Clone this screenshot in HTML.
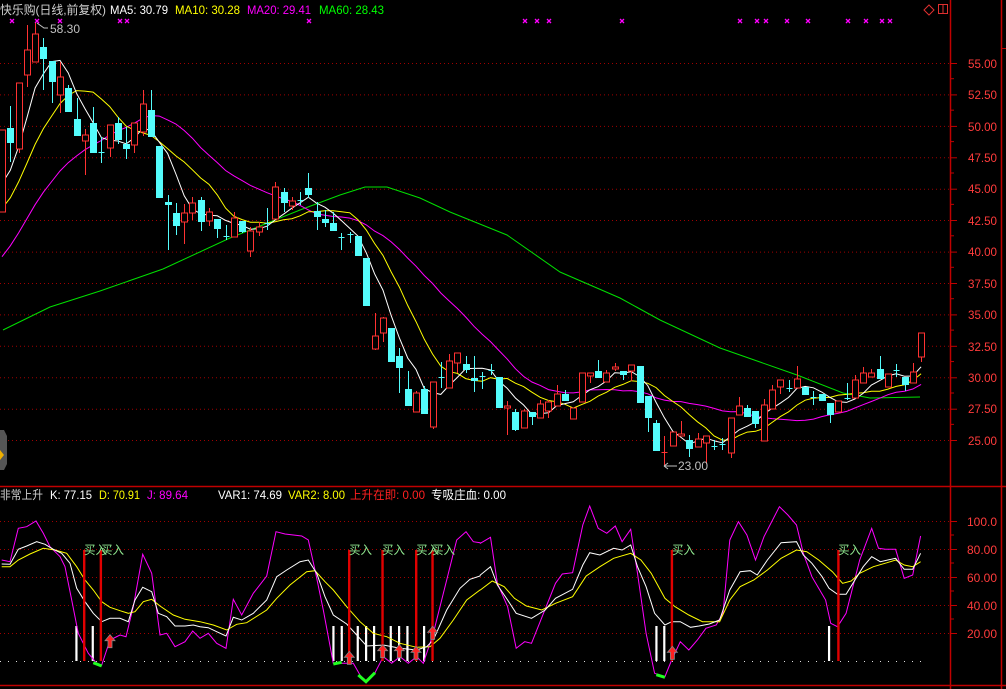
<!DOCTYPE html>
<html><head><meta charset="utf-8">
<style>
html,body{margin:0;padding:0;background:#000;}
svg{display:block;}
text{font-family:"Liberation Sans","Noto Sans CJK SC",sans-serif;font-size:12px;}
</style></head>
<body>
<svg id="s" width="1006" height="689" viewBox="0 0 1006 689" xmlns="http://www.w3.org/2000/svg">
<rect width="1006" height="689" fill="#000"/>
<g id="grid"></g>
<g id="lines"></g>
<g id="cand"></g>
<g id="low"></g>
<line x1="950.5" y1="0" x2="950.5" y2="689" stroke="#c00000" stroke-width="1.5"/>
<line x1="1001.5" y1="0" x2="1001.5" y2="689" stroke="#c00000" stroke-width="1.5"/>
<line x1="0" y1="486.5" x2="1006" y2="486.5" stroke="#c00000" stroke-width="1.5"/>
<line x1="0" y1="685.5" x2="1006" y2="685.5" stroke="#c00000" stroke-width="1.5"/>
<line x1="1001" y1="48.5" x2="1006" y2="48.5" stroke="#c00000"/>
<g id="ticks"></g>
<path d="M929 5 L934 10 L929 15 L924 10 Z" fill="none" stroke="#e03030"/>
<rect x="938.5" y="4.5" width="9" height="9" fill="none" stroke="#e03030"/>
<line x1="943" y1="4.5" x2="943" y2="13.5" stroke="#e03030"/>
<path d="M0 430 L4 430 L7 436 L7 464 L4 470 L0 470 Z" fill="#555"/>
<path d="M0 450 L4 455 L0 460 Z" fill="#f0b000"/>
<text x="0" y="14" fill="#d0d0d0" textLength="106" lengthAdjust="spacingAndGlyphs">快乐购(日线,前复权)</text>
<text x="110" y="14" fill="#fff" textLength="58" lengthAdjust="spacingAndGlyphs">MA5: 30.79</text>
<text x="175" y="14" fill="#ffff00" textLength="65" lengthAdjust="spacingAndGlyphs">MA10: 30.28</text>
<text x="247" y="14" fill="#ff00ff" textLength="64" lengthAdjust="spacingAndGlyphs">MA20: 29.41</text>
<text x="319" y="14" fill="#00ff00" textLength="65" lengthAdjust="spacingAndGlyphs">MA60: 28.43</text>
<text x="0" y="499" fill="#d0d0d0" textLength="43" lengthAdjust="spacingAndGlyphs">非常上升</text>
<text x="50" y="499" fill="#fff" textLength="42" lengthAdjust="spacingAndGlyphs">K: 77.15</text>
<text x="99" y="499" fill="#ffff00" textLength="41" lengthAdjust="spacingAndGlyphs">D: 70.91</text>
<text x="147" y="499" fill="#ff00ff" textLength="41" lengthAdjust="spacingAndGlyphs">J: 89.64</text>
<text x="218" y="499" fill="#fff" textLength="64" lengthAdjust="spacingAndGlyphs">VAR1: 74.69</text>
<text x="288" y="499" fill="#ffff00" textLength="57" lengthAdjust="spacingAndGlyphs">VAR2: 8.00</text>
<text x="350" y="499" fill="#ff2020" textLength="75" lengthAdjust="spacingAndGlyphs">上升在即: 0.00</text>
<text x="431" y="499" fill="#fff" textLength="75" lengthAdjust="spacingAndGlyphs">专吸庄血: 0.00</text>
<path d="M37 23 L44 28 L48 28" fill="none" stroke="#c0c0c0"/>
<text x="50" y="33" fill="#c0c0c0" textLength="30" lengthAdjust="spacingAndGlyphs">58.30</text>
<path d="M664 466 L677 466 M664 466 L668 463 M664 466 L668 469" fill="none" stroke="#c0c0c0"/>
<text x="678" y="470" fill="#c0c0c0" textLength="30" lengthAdjust="spacingAndGlyphs">23.00</text>
<g fill="#ff3c3c">
<text x="968" y="68" textLength="29" lengthAdjust="spacingAndGlyphs">55.00</text>
<text x="968" y="99" textLength="29" lengthAdjust="spacingAndGlyphs">52.50</text>
<text x="968" y="131" textLength="29" lengthAdjust="spacingAndGlyphs">50.00</text>
<text x="968" y="162" textLength="29" lengthAdjust="spacingAndGlyphs">47.50</text>
<text x="968" y="193" textLength="29" lengthAdjust="spacingAndGlyphs">45.00</text>
<text x="968" y="225" textLength="29" lengthAdjust="spacingAndGlyphs">42.50</text>
<text x="968" y="256" textLength="29" lengthAdjust="spacingAndGlyphs">40.00</text>
<text x="968" y="288" textLength="29" lengthAdjust="spacingAndGlyphs">37.50</text>
<text x="968" y="319" textLength="29" lengthAdjust="spacingAndGlyphs">35.00</text>
<text x="968" y="351" textLength="29" lengthAdjust="spacingAndGlyphs">32.50</text>
<text x="968" y="382" textLength="29" lengthAdjust="spacingAndGlyphs">30.00</text>
<text x="968" y="413" textLength="29" lengthAdjust="spacingAndGlyphs">27.50</text>
<text x="968" y="445" textLength="29" lengthAdjust="spacingAndGlyphs">25.00</text>
<text x="967" y="526" textLength="30" lengthAdjust="spacingAndGlyphs">100.0</text>
<text x="967" y="554" textLength="30" lengthAdjust="spacingAndGlyphs">80.00</text>
<text x="967" y="582" textLength="30" lengthAdjust="spacingAndGlyphs">60.00</text>
<text x="967" y="610" textLength="30" lengthAdjust="spacingAndGlyphs">40.00</text>
<text x="967" y="638" textLength="30" lengthAdjust="spacingAndGlyphs">20.00</text>
</g>
<g fill="#90e890" font-size="11">
<text x="84" y="554" textLength="23" lengthAdjust="spacingAndGlyphs">买入</text>
<text x="101" y="554" textLength="23" lengthAdjust="spacingAndGlyphs">买入</text>
<text x="349" y="554" textLength="23" lengthAdjust="spacingAndGlyphs">买入</text>
<text x="382" y="554" textLength="23" lengthAdjust="spacingAndGlyphs">买入</text>
<text x="416" y="554" textLength="23" lengthAdjust="spacingAndGlyphs">买入</text>
<text x="432" y="554" textLength="23" lengthAdjust="spacingAndGlyphs">买入</text>
<text x="672" y="554" textLength="23" lengthAdjust="spacingAndGlyphs">买入</text>
<text x="838" y="554" textLength="23" lengthAdjust="spacingAndGlyphs">买入</text>
</g>
</svg>
<script>
(function(){
var NS="http://www.w3.org/2000/svg";
function el(p,t,a){var e=document.createElementNS(NS,t);for(var k in a)e.setAttribute(k,a[k]);document.getElementById(p).appendChild(e);return e;}
function pl(p,pts,c,w){el(p,"polyline",{points:pts.map(function(q){return q[0].toFixed(1)+","+q[1].toFixed(1)}).join(" "),fill:"none",stroke:c,"stroke-width":w||1});}
var gy=[63,94.4,125.9,157.3,188.7,220,251.6,283,314.4,345.8,377.3,408.7,440,521,549,577,605,633];
gy.forEach(function(y){el("grid","line",{x1:0,y1:y+.5,x2:950,y2:y+.5,stroke:"#a00000","stroke-dasharray":"1,3"});
el("ticks","line",{x1:950,y1:y+.5,x2:957,y2:y+.5,stroke:"#c00000"});});
for(var i=0;i<gy.length-1;i++){if(gy[i+1]-gy[i]<40)el("ticks","line",{x1:950,y1:(gy[i]+gy[i+1])/2,x2:954,y2:(gy[i]+gy[i+1])/2,stroke:"#c00000"});}
el("grid","line",{x1:0,y1:661.5,x2:922,y2:661.5,stroke:"#ddd","stroke-dasharray":"1,7"});
[12,37,60,120,127,309,525,537,549,622,740,757,766,787,808,848,866,882,890].forEach(function(x){
el("grid","path",{d:"M"+(x-2)+" 19 L"+(x+2)+" 23 M"+(x+2)+" 19 L"+(x-2)+" 23",stroke:"#ff00ff","stroke-width":1.3});});
var D=[[212,130,130,212],[128,143,106,162],[149,83,83,153],[75,50,25,87],[62,34,23,62],[47,59,38,90],[61,82,61,103],[95,77,62,113],[88,112,85,112],[119,136,98,136],[141,135,129,175],[123,153,107,153],[152,152.01,137,163],[148,125,125,157],[123,140,117,144],[144,149,127,159],[145,123,123,153],[132,104,90,136],[110,137,90,137],[146,198,146,198],[202,205,195,250],[213,226,203,235],[222,213,204,244],[213,203,197,220],[200,222,197,231],[221,212,208,226],[219,229,219,238],[236,236.01,225,240],[237,218,212,237],[221,232,221,233],[251,231,227,257],[232,227,222,236],[223,223.01,208,230],[219,187,182,219],[192,203,188,212],[206,201,197,210],[200,200,192,205],[188,195,173,198],[211,217,202,230],[219,223,210,227],[223,231,212,231],[237,237,233,250],[234,234.01,232,243],[236,256,236,256],[258,306,258,306],[349,336,313,350],[333,318,317,342],[328,362,328,362],[356,368,348,393],[389,406,371,406],[412,393,391,412],[389,414,386,414],[427,382,382,429],[377,377,362,388],[388,361,354,388],[363,353,353,373],[364,370,356,373],[378,381,356,392],[376,376.01,372,389],[370,370,364,375],[377,408,377,408],[408,406,401,435],[412,430,409,431],[428,411,409,428],[412,417,412,425],[418,404,400,418],[411,402,400,418],[406,394,385,406],[394,401,390,401],[419,408,408,419],[402,373,373,402],[376,373,373,383],[371,378,360,378],[382,373,370,382],[369,367,363,371],[371,375,371,380],[371,365,365,381],[366,403,366,403],[396,418,396,432],[423,451,420,451],[453,452,436,466],[446,432,432,446],[436,434,421,436],[440,449,435,457],[447,439,433,447],[443,436,436,464],[446,446,440,450],[444,444,438,450],[453,418,418,458],[415,406,397,415],[408,417,405,417],[411,424,411,428],[441,405,399,441],[409,390,385,409],[387,380,380,394],[388,388.01,380,392],[388,379,366,388],[387,395,387,395],[397,397.01,391,405],[394,401,394,401],[403,415,403,423],[412,401,401,412],[398,398,383,400],[398,380,375,398],[383,373,367,383],[377,373,369,377],[369,379,356,379],[387,374,374,387],[370,370.01,364,377],[377,385,377,391],[383,372,363,383],[357,333,333,362]];
function X(i){return 2+i*8.28;}
var pad=[];for(var k=0;k<19;k++){var t=k/18;pad.push(360-175*Math.pow(t,0.8));}
var C=pad.concat(D.map(function(d){return d[1]}));
function ma(n){var r=[];for(var i=0;i<D.length;i++){var j=i+19,s=0,m=Math.min(n,j+1);for(var q=0;q<m;q++)s+=C[j-q];r.push([X(i),s/m]);}return r;}
pl("lines",[[3,330],[50,307],[100,291],[163,269],[230,238],[300,210],[340,195],[365,187],[387,187],[420,198],[450,212],[507,235],[560,272],[620,298],[660,320],[720,348],[797,375],[843,393],[870,398],[920,397]],"#00e000");
pl("lines",ma(20),"#ff00ff");
pl("lines",ma(10),"#ffff00");
pl("lines",ma(5),"#ffffff");
D.forEach(function(d,i){var x=Math.round(X(i))+.5,o=d[0],c=d[1],h=d[2],l=d[3];
var up=c<o,col=up?"#ff3232":"#54fcfc",top=Math.min(o,c),bot=Math.max(o,c);
if(bot-top<1.5){el("cand","line",{x1:x,y1:h,x2:x,y2:l,stroke:col});el("cand","line",{x1:x-3,y1:top+.5,x2:x+3,y2:top+.5,stroke:col});return;}
if(h<top)el("cand","line",{x1:x,y1:h,x2:x,y2:top,stroke:col});
if(l>bot)el("cand","line",{x1:x,y1:bot,x2:x,y2:l,stroke:col});
if(up)el("cand","rect",{x:x-3,y:top,width:6,height:bot-top,fill:"#000",stroke:col});
else el("cand","rect",{x:x-3.5,y:top,width:7,height:bot-top,fill:col});});
function z7(a){return a.map(function(p){return [p[0]/3,500+p[1]/3]});}
function z8(a){return a.map(function(p){return [470+p[0]/2.925,500+p[1]/3]});}
var J7=[[5,180],[30,185],[55,85],[80,80],[108,63],[130,100],[150,140],[180,170],[195,200],[215,300],[235,400],[265,460],[290,490],[305,495],[330,420],[360,405],[378,410],[400,320],[428,163],[455,220],[480,405],[500,400],[525,440],[555,425],[578,393],[600,415],[625,400],[650,430],[678,445],[700,298],[725,345],[760,280],[800,228],[828,95],[855,102],[905,108],[925,120],[945,210],[970,330],[1000,490],[1030,490],[1060,490],[1080,525],[1098,545],[1125,518],[1150,470],[1175,490],[1200,470],[1225,490],[1250,470],[1270,490],[1300,400],[1340,240],[1370,120],[1398,95],[1420,125],[1440,128]];
var J8=[[30,130],[60,112],[80,250],[110,320],[135,445],[160,425],[180,430],[250,250],[270,222],[300,218],[330,75],[350,18],[375,85],[400,100],[425,78],[445,125],[470,88],[490,220],[515,400],[540,520],[570,530],[590,480],[615,425],[640,450],[665,420],[690,385],[720,375],[740,340],[760,120],[785,65],[810,105],[835,180],[860,110],[905,20],[930,45],[955,75],[975,160],[1000,230],[1020,265],[1040,300],[1055,370],[1075,380],[1100,340],[1140,180],[1175,85],[1195,145],[1215,148],[1245,148],[1270,235],[1295,225],[1318,108]];
var K7=[[5,192],[30,193],[55,148],[80,138],[110,125],[135,133],[160,148],[185,160],[210,190],[230,265],[255,305],[280,340],[305,365],[330,355],[360,355],[385,365],[405,300],[428,262],[455,275],[475,340],[500,350],[525,378],[555,378],[580,375],[600,380],[625,383],[650,395],[678,408],[700,352],[725,360],[760,340],[800,300],[830,230],[860,210],[900,185],[925,180],[950,220],[975,290],[1000,345],[1040,372],[1070,405],[1100,438],[1150,435],[1200,445],[1250,450],[1280,440],[1300,420],[1340,330],[1380,265],[1410,238],[1440,228]];
var K8=[[30,225],[60,200],[80,255],[110,300],[135,340],[180,355],[220,330],[250,295],[300,268],[330,195],[350,158],[380,165],[420,145],[445,150],[470,135],[490,200],[515,260],[540,340],[570,375],[590,365],[615,365],[645,382],[670,378],[700,372],[730,360],[760,270],[790,215],[820,212],[840,225],[870,180],[910,128],[955,125],[975,165],[1000,190],[1030,230],[1050,265],[1075,283],[1100,283],[1120,250],[1150,200],[1175,170],[1200,185],[1245,175],[1270,208],[1295,208],[1318,160]];
var D7=[[5,200],[30,200],[55,180],[90,162],[130,145],[165,150],[200,160],[230,200],[255,240],[280,270],[305,305],[330,322],[360,332],[385,340],[405,335],[430,305],[455,298],[480,318],[520,345],[555,358],[600,365],[640,375],[680,390],[710,373],[740,368],[800,330],[830,295],[870,255],[920,215],[945,212],[975,245],[1000,270],[1040,320],[1080,365],[1120,400],[1160,410],[1200,430],[1250,442],[1290,440],[1320,415],[1360,360],[1400,300],[1440,270]];
var D8=[[30,270],[65,243],[100,260],[130,295],[165,318],[210,330],[250,310],[300,290],[340,228],[380,200],[420,175],[470,160],[500,180],[530,220],[570,295],[600,320],[640,345],[680,365],[730,365],[760,300],[790,260],[830,240],[870,210],[910,175],[955,150],[985,155],[1020,180],[1060,215],[1090,250],[1115,243],[1140,220],[1180,200],[1220,188],[1245,180],[1270,195],[1295,200],[1318,185]];
[229,278,1000,1025,1073,1098,1122,1172,1197,1222,1272].forEach(function(z){var x=z/3;el("low","rect",{x:x-1,y:626,width:2.2,height:35,fill:"#fff"});});
[545,568,1050].forEach(function(z){var x=470+z/2.925;el("low","rect",{x:x-1,y:626,width:2.2,height:35,fill:"#fff"});});
pl("low",z7(J7).concat(z8(J8)),"#ff00ff");
pl("low",z7(D7).concat(z8(D8)),"#ffff00");
pl("low",z7(K7).concat(z8(K8)),"#ffffff");
var rx=[252,302,1047,1147,1248,1297].map(function(z){return z/3}).concat([590,1077].map(function(z){return 470+z/2.925}));
rx.forEach(function(x){el("low","rect",{x:x-1,y:550,width:2.4,height:111,fill:"#e00000"});});
[[[280,488],[305,498]],[[1000,492],[1025,487]],[[1075,525],[1098,545],[1125,518]]].forEach(function(s){pl("low",z7(s),"#20ff20",3);});
pl("low",z8([[545,524],[570,532]]),"#20ff20",3);
var ar=z7([[330,425],[1048,475],[1148,455],[1198,455],[1248,460],[1298,400]]).concat(z8([[592,460]]));
ar.forEach(function(p){var x=p[0],y=p[1];
el("low","path",{d:"M"+x+" "+(y-7)+" L"+(x+5)+" "+(y-1)+" L"+(x+2)+" "+(y-1)+" L"+(x+2)+" "+(y+6)+" L"+(x-2)+" "+(y+6)+" L"+(x-2)+" "+(y-1)+" L"+(x-5)+" "+(y-1)+" Z",fill:"#ff2020",stroke:"#888","stroke-width":0.8});});
})();
</script>
</body></html>
